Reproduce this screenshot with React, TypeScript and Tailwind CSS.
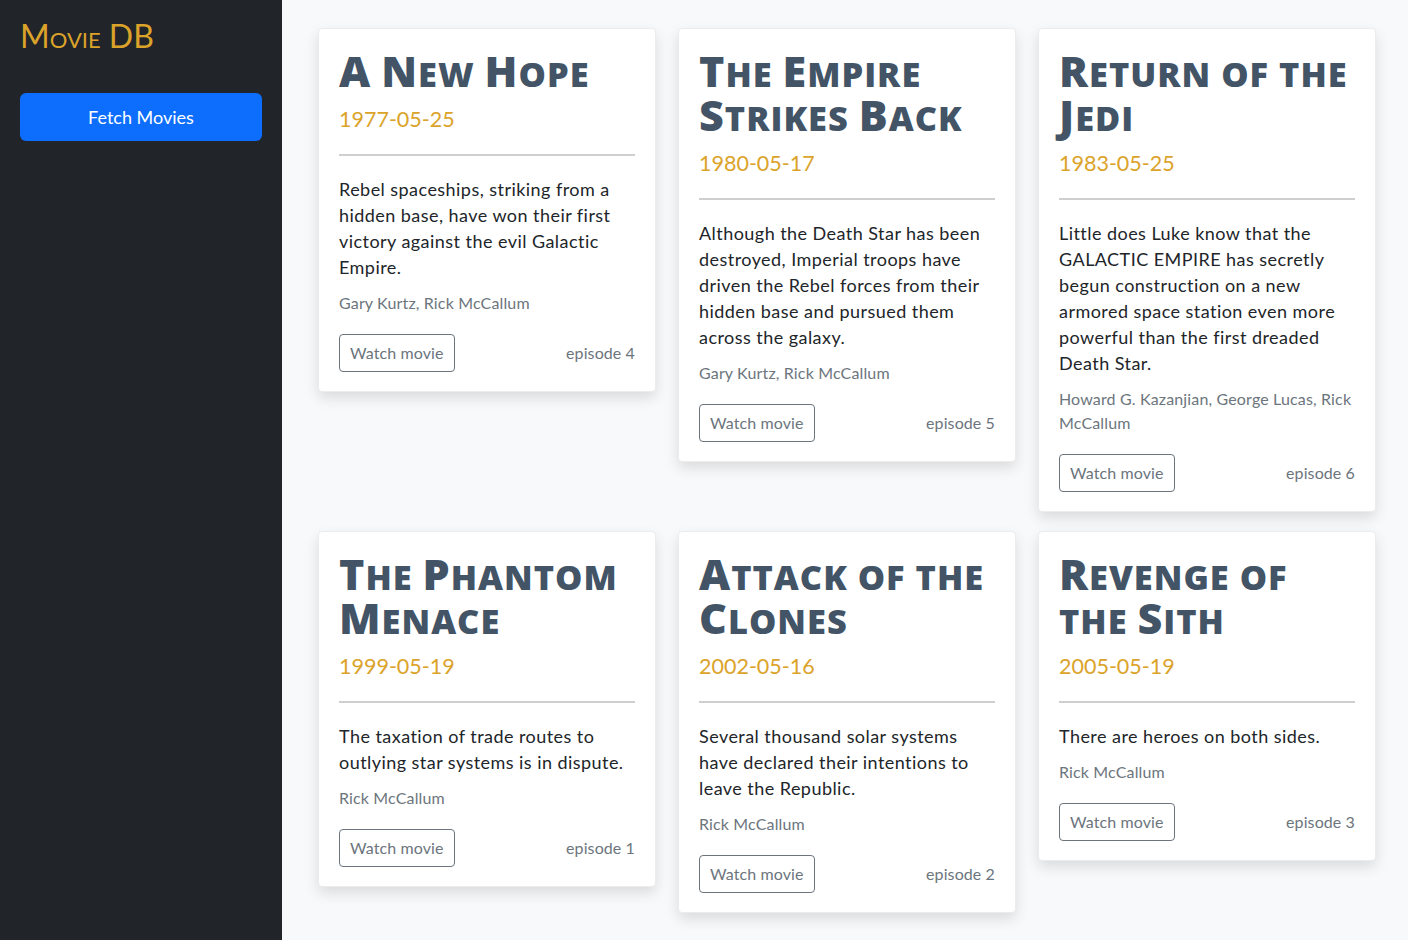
import React from 'react';

type Movie = {
  title: string;
  date: string;
  crawl: string;
  producers: string;
  episode: number;
};

const movies: Movie[] = [
  {
    title: 'A New Hope',
    date: '1977-05-25',
    crawl:
      'Rebel spaceships, striking from a hidden base, have won their first victory against the evil Galactic Empire.',
    producers: 'Gary Kurtz, Rick McCallum',
    episode: 4,
  },
  {
    title: 'The Empire Strikes Back',
    date: '1980-05-17',
    crawl:
      'Although the Death Star has been destroyed, Imperial troops have driven the Rebel forces from their hidden base and pursued them across the galaxy.',
    producers: 'Gary Kurtz, Rick McCallum',
    episode: 5,
  },
  {
    title: 'Return of the Jedi',
    date: '1983-05-25',
    crawl:
      'Little does Luke know that the GALACTIC EMPIRE has secretly begun construction on a new armored space station even more powerful than the first dreaded Death Star.',
    producers: 'Howard G. Kazanjian, George Lucas, Rick McCallum',
    episode: 6,
  },
  {
    title: 'The Phantom Menace',
    date: '1999-05-19',
    crawl: 'The taxation of trade routes to outlying star systems is in dispute.',
    producers: 'Rick McCallum',
    episode: 1,
  },
  {
    title: 'Attack of the Clones',
    date: '2002-05-16',
    crawl:
      'Several thousand solar systems have declared their intentions to leave the Republic.',
    producers: 'Rick McCallum',
    episode: 2,
  },
  {
    title: 'Revenge of the Sith',
    date: '2005-05-19',
    crawl: 'There are heroes on both sides.',
    producers: 'Rick McCallum',
    episode: 3,
  },
];

// small caps by hand: the font's synthesized ones come out too small
function SmallCaps({ text }: { text: string }) {
  const runs = text.match(/[A-Z]+|[^A-Z]+/g) ?? [];
  return (
    <>
      {runs.map((r, i) =>
        /^[A-Z]/.test(r) ? (
          <span key={i}>{r}</span>
        ) : (
          <span key={i} className="uppercase text-[0.8em] leading-none">
            {r}
          </span>
        ),
      )}
    </>
  );
}

function MovieCard({ movie }: { movie: Movie }) {
  return (
    <div className="w-[338px] bg-white rounded-[4px] border border-[#ececec] shadow-[0_6px_14px_rgba(0,0,0,0.12)] px-[20px] pt-[20px] pb-[19px]">
      <h2 className="font-['Open_Sans',sans-serif] text-[43px] leading-[44px] font-extrabold tracking-[1px] text-[#435466]">
        <SmallCaps text={movie.title} />
      </h2>
      <div className="mt-[11px] text-[21.5px] leading-[30px] text-[#dba32a]">{movie.date}</div>
      <hr className="mt-[20px] border-0 h-[2px] bg-[#cfcfcf]" />
      <p className="mt-[20px] text-[18px] leading-[26px] tracking-[0.45px] text-[#212529]">{movie.crawl}</p>
      <p className="mt-[11px] text-[16px] leading-[24px] tracking-[0.15px] text-[#6c757d]">{movie.producers}</p>
      <div className="mt-[19px] flex items-center justify-between">
        <button className="h-[38px] px-[10px] border border-[#6c757d] rounded-[4px] text-[16px] tracking-[0.1px] text-[#6c757d] bg-white">
          Watch movie
        </button>
        <span className="text-[16px] tracking-[0.1px] text-[#6c757d]">episode {movie.episode}</span>
      </div>
    </div>
  );
}

export default function App() {
  return (
    <div className="min-h-screen flex bg-[#f8f9fa] font-['Lato',sans-serif]">
      {/* Sidebar */}
      <aside className="w-[282px] shrink-0 min-h-screen bg-[#212529] px-[20px] pt-[16px]">
        <h1 className="text-[32px] leading-[40px] text-[#dba32a] [font-variant:small-caps]">Movie DB</h1>
        <button className="mt-[37px] w-full h-[48px] rounded-[6px] bg-[#0d6efd] text-white text-[18px]">
          Fetch Movies
        </button>
      </aside>

      {/* Movie grid */}
      <main className="pl-[36px] pt-[28px] pb-[28px]">
        <div className="grid grid-cols-[338px_338px_338px] gap-x-[22px] gap-y-[19px] items-start">
          {movies.map((m) => (
            <MovieCard key={m.episode} movie={m} />
          ))}
        </div>
      </main>
    </div>
  );
}
